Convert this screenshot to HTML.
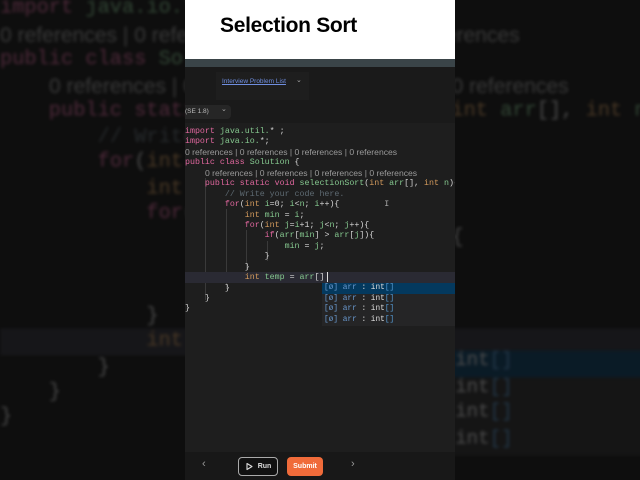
<!DOCTYPE html>
<html><head><style>
*{margin:0;padding:0;box-sizing:border-box}
html,body{width:640px;height:480px;overflow:hidden}
body{background:#0e0e0e;position:relative;font-family:"Liberation Sans",sans-serif}
.clip{position:absolute;left:0;top:0;width:640px;height:480px;overflow:hidden}
.code{position:absolute;left:0;top:0;width:270px;height:480px}
.bg .code{height:333px}
.ln{position:absolute;left:0;top:127px;font-family:"Liberation Mono",monospace;font-size:8.3px;color:#d4d4d4}
.ln div{height:10.45px;line-height:10.45px;white-space:pre}
.ln div.rf{font-family:"Liberation Sans",sans-serif;font-size:8.6px;color:#9a9a9a;margin-top:-1px;margin-bottom:1px}
.k{color:#e0679e}.t{color:#d39a5c}.g{color:#85c88f}.c{color:#5e6a72}
.bg{position:absolute;left:0;top:-338px;width:270px;height:333px;overflow:hidden;transform:scale(2.45);transform-origin:0 0;opacity:.3;filter:blur(.6px)}
.panel{position:absolute;left:185px;top:0;width:270px;height:480px;background:#1e1e1e;overflow:hidden}
.ac{position:absolute;left:137px;top:283px;width:200px;height:43px;background:#252526}
.ac div{height:10.6px;font-family:"Liberation Mono",monospace;font-size:7.8px;line-height:10.6px;padding-left:2px;color:#ddd;white-space:pre}
.ac .s{background:#04395e}
.hl{position:absolute;left:0;top:272px;width:320px;height:11px;background:#2a2a33}
.guide{position:absolute;width:1px;background:#3a3a3a}
.btn{position:absolute;display:flex;align-items:center;justify-content:center;font-size:7px;font-weight:bold;border-radius:4px}
</style></head><body>

<div class="clip">
<div class="bg">
 <div class="code">
  <div class="hl"></div>
  <div class="ln">
<div><span class="k">import</span> <span class="g">java.util.</span>* ;</div>
<div><span class="k">import</span> <span class="g">java.io.</span>*;</div>
<div class="rf">0 references | 0 references | 0 references | 0 references</div>
<div><span class="k">public class</span> <span class="g">Solution</span> {</div>
<div class="rf" style="padding-left:20px">0 references | 0 references | 0 references | 0 references</div>
<div>    <span class="k">public static void</span> <span class="g">selectionSort</span>(<span class="t">int</span> <span class="g">arr</span>[], <span class="t">int</span> <span class="g">n</span>){</div>
<div>        <span class="c">// Write your code here.</span></div>
<div>        <span class="k">for</span>(<span class="t">int</span> <span class="g">i</span>=0; <span class="g">i</span>&lt;<span class="g">n</span>; <span class="g">i</span>++){</div>
<div>            <span class="t">int</span> <span class="g">min</span> = <span class="g">i</span>;</div>
<div>            <span class="k">for</span>(<span class="t">int</span> <span class="g">j</span>=<span class="g">i</span>+1; <span class="g">j</span>&lt;<span class="g">n</span>; <span class="g">j</span>++){</div>
<div>                <span class="k">if</span>(<span class="g">arr</span>[<span class="g">min</span>] &gt; <span class="g">arr</span>[<span class="g">j</span>]){</div>
<div>                    <span class="g">min</span> = <span class="g">j</span>;</div>
<div>                }</div>
<div>            }</div>
<div>            <span class="t">int</span> <span class="g">temp</span> = <span class="g">arr</span>[]</div>
<div>        }</div>
<div>    }</div>
<div>}</div>
  </div>
  <div class="ac" style="width:300px;top:281px"><div class="s"><span style="color:#6a9ad0">[ø] arr</span> : int<span style="color:#569cd6">[]</span></div><div><span style="color:#6a9ad0">[ø] arr</span> : int<span style="color:#569cd6">[]</span></div><div><span style="color:#6a9ad0">[ø] arr</span> : int<span style="color:#569cd6">[]</span></div><div><span style="color:#6a9ad0">[ø] arr</span> : int<span style="color:#569cd6">[]</span></div></div>
 </div>
</div>
</div>

<div class="panel">
 <div style="position:absolute;left:0;top:0;width:270px;height:59px;background:#fff"></div>
 <div style="position:absolute;left:35px;top:14px;font-size:21px;font-weight:bold;color:#000;letter-spacing:-.3px">Selection Sort</div>
 <div style="position:absolute;left:0;top:59px;width:270px;height:8px;background:#3a4448"></div>
 <div style="position:absolute;left:0;top:67px;width:270px;height:56px;background:#1a1a1a"></div>
 <div style="position:absolute;left:31px;top:72px;width:93px;height:28px;background:#1e1e1e"></div>
 <div style="position:absolute;left:37px;top:78px;font-size:6.5px;color:#6f8ee0;text-decoration:underline">Interview Problem List</div>
 <div style="position:absolute;left:111px;top:76px;font-size:7px;color:#aaa">⌄</div>
 <div style="position:absolute;left:0;top:105px;width:46px;height:14px;background:#262626;border-radius:0 4px 4px 0"></div>
 <div style="position:absolute;left:0;top:108px;font-size:6.5px;color:#bbb">(SE 1.8)</div>
 <div style="position:absolute;left:36px;top:105px;font-size:7px;color:#aaa">⌄</div>
 <div class="guide" style="left:20px;top:178px;height:122px"></div>
 <div class="guide" style="left:41px;top:209px;height:80px"></div>
 <div class="guide" style="left:61px;top:230px;height:40px"></div>
 <div class="guide" style="left:82px;top:241px;height:20px"></div>
 <div class="code">
  <div class="hl"></div>
  <div style="position:absolute;left:142px;top:272px;width:1px;height:10px;background:#ddd"></div>
  <div class="ln">
<div><span class="k">import</span> <span class="g">java.util.</span>* ;</div>
<div><span class="k">import</span> <span class="g">java.io.</span>*;</div>
<div class="rf">0 references | 0 references | 0 references | 0 references</div>
<div><span class="k">public class</span> <span class="g">Solution</span> {</div>
<div class="rf" style="padding-left:20px">0 references | 0 references | 0 references | 0 references</div>
<div>    <span class="k">public static void</span> <span class="g">selectionSort</span>(<span class="t">int</span> <span class="g">arr</span>[], <span class="t">int</span> <span class="g">n</span>){</div>
<div>        <span class="c">// Write your code here.</span></div>
<div>        <span class="k">for</span>(<span class="t">int</span> <span class="g">i</span>=0; <span class="g">i</span>&lt;<span class="g">n</span>; <span class="g">i</span>++){         <span style="color:#aaa">I</span></div>
<div>            <span class="t">int</span> <span class="g">min</span> = <span class="g">i</span>;</div>
<div>            <span class="k">for</span>(<span class="t">int</span> <span class="g">j</span>=<span class="g">i</span>+1; <span class="g">j</span>&lt;<span class="g">n</span>; <span class="g">j</span>++){</div>
<div>                <span class="k">if</span>(<span class="g">arr</span>[<span class="g">min</span>] &gt; <span class="g">arr</span>[<span class="g">j</span>]){</div>
<div>                    <span class="g">min</span> = <span class="g">j</span>;</div>
<div>                }</div>
<div>            }</div>
<div>            <span class="t">int</span> <span class="g">temp</span> = <span class="g">arr</span>[]</div>
<div>        }</div>
<div>    }</div>
<div>}</div>
  </div>
  <div class="ac"><div class="s"><span style="color:#6a9ad0">[ø] arr</span> : int<span style="color:#569cd6">[]</span></div><div><span style="color:#6a9ad0">[ø] arr</span> : int<span style="color:#569cd6">[]</span></div><div><span style="color:#6a9ad0">[ø] arr</span> : int<span style="color:#569cd6">[]</span></div><div><span style="color:#6a9ad0">[ø] arr</span> : int<span style="color:#569cd6">[]</span></div></div>
 </div>
 <div style="position:absolute;left:0;top:452px;width:270px;height:28px;background:#181818"></div>
 <div style="position:absolute;left:17px;top:458px;font-size:11px;color:#999">‹</div>
 <div style="position:absolute;left:166px;top:458px;font-size:11px;color:#999">›</div>
 <div class="btn" style="left:53px;top:457px;width:40px;height:19px;border:1px solid #aaa;background:#111;color:#ddd">
  <svg width="9" height="9" viewBox="0 0 9 9" style="margin-right:4px"><path d="M2 1.5 L7 4.5 L2 7.5 Z" fill="none" stroke="#ddd" stroke-width="1.1" stroke-linejoin="round"/></svg>Run</div>
 <div class="btn" style="left:102px;top:457px;width:36px;height:19px;background:#f06b3a;color:#fff">Submit</div>
</div>
</body></html>
